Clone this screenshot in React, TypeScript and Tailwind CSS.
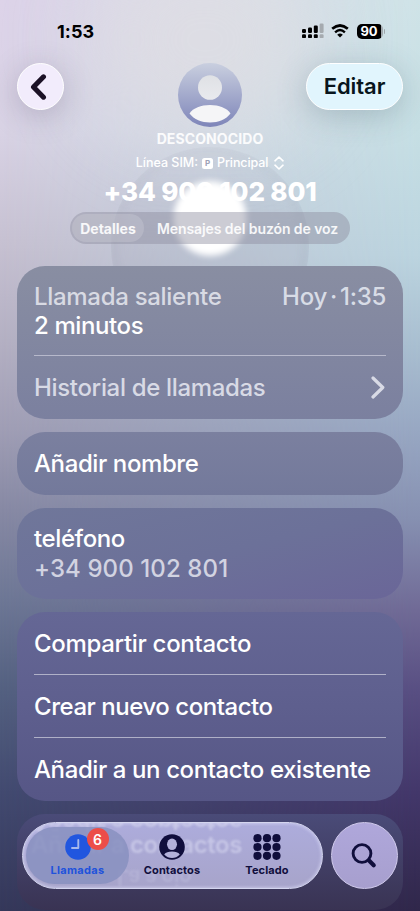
import React from 'react';

type CardProps = {
  className: string;
  children?: React.ReactNode;
};

const Card = ({ className, children }: CardProps) => (
  <section className={`w-full shrink-0 rounded-[28px] px-[17px] ${className}`}>{children}</section>
);

const Divider = () => <div className="h-px shrink-0 bg-[#c4c5d6]/80" />;

const StatusBar = () => (
  <div className="flex h-[63px] items-start justify-between pl-[57px] pr-[35px] pt-[21px]">
    <span className="pt-px text-[18px] font-bold leading-[20px] tracking-[0.1px] text-black">1:53</span>
    <div className="flex items-center pt-[2px]">
      {/* dual SIM signal */}
      <svg width="22" height="16" viewBox="0 0 22 16" className="mr-[7px]">
        <g fill="#000">
          <rect x="0" y="6" width="4" height="4" rx="1.2" />
          <rect x="6" y="4.500" width="4" height="5.500" rx="1.2" />
          <rect x="11.800" y="2.500" width="4" height="7.500" rx="1.2" />
          <rect x="0" y="11.300" width="4" height="3.800" rx="1.2" />
          <rect x="6" y="11.300" width="4" height="3.800" rx="1.2" />
          <rect x="11.800" y="11.300" width="4" height="3.800" rx="1.2" />
        </g>
        <g fill="#a5aaaf">
          <rect x="17.600" y="0.500" width="4" height="9.500" rx="1.2" />
          <rect x="17.600" y="11.300" width="4" height="3.800" rx="1.2" />
        </g>
      </svg>
      <svg width="18" height="14" viewBox="0 0 18 14" className="mr-[8px]">
        <path d="M1.2 4.800Q9-1.800 16.800 4.800" fill="none" stroke="#000" strokeWidth="2.700" />
        <path d="M4.100 8.300Q9 3.900 13.900 8.300" fill="none" stroke="#000" strokeWidth="2.400" />
        <path d="M6.200 10.700Q9 8.500 11.800 10.700L9 13.600Z" fill="#000" />
      </svg>
      <div className="flex items-center">
        <div className="flex h-[15px] w-[26px] overflow-hidden rounded-[5px] bg-[linear-gradient(90deg,#000_91%,#a2a9ae_91%)]">
          <span className="w-full pr-[1px] text-center text-[13px] font-bold leading-[15px] text-white">90</span>
        </div>
        <div className="ml-[1px] h-[5px] w-[1.5px] rounded-r-full bg-[#9fa6ab]" />
      </div>
    </div>
  </div>
);

const Avatar = () => (
  <svg width="64" height="64" viewBox="0 0 64 64">
    <defs>
      <linearGradient id="avatarBg" x1="0" y1="0" x2="0" y2="1">
        <stop offset="0" stopColor="#c9cfdf" />
        <stop offset="1" stopColor="#7e85b9" />
      </linearGradient>
      <linearGradient id="avatarFg" x1="0" y1="0" x2="0" y2="1">
        <stop offset="0" stopColor="#dfe1e5" />
        <stop offset="1" stopColor="#e9eaee" />
      </linearGradient>
    </defs>
    <circle cx="32" cy="32" r="32" fill="url(#avatarBg)" />
    <ellipse cx="32" cy="24.500" rx="12" ry="12.300" fill="url(#avatarFg)" />
    <path d="M11.500 50.500C15 45 23 42 32 42s17 3 20.500 8.500C48 56.500 40.500 59.500 32 59.500S16 56.500 11.500 50.500Z" fill="#f5f5f7" />
  </svg>
);

const TabBar = () => (
  <nav className="absolute left-[22px] top-[822px] flex gap-[8px]">
    <div className="relative flex h-[67px] w-[301px] overflow-hidden rounded-full border border-[#d4d5ef] bg-linear-to-b from-[#adacdc] to-[#a7a4ca] shadow-[inset_0_0_3px_1px_rgba(220,220,250,0.55)]">
      {/* list row refracted through the glass */}
      <div aria-hidden="true" className="absolute inset-0 whitespace-nowrap text-[24px] font-semibold leading-[28px] tracking-[-0.400px] text-[#d2d1ec]/70 blur-[1.3px]">
        <div className="absolute left-[8px] top-[-15px] -scale-y-100">Añadir a contactos</div>
        <div className="absolute left-[8px] top-[8px]">Añadir a contactos</div>
        <div className="absolute left-[94px] top-[40px] -scale-y-100 text-[21px] opacity-40">La a ojo</div>
      </div>

      <div className="relative ml-[3px] mt-[4px] flex h-[57px] w-[103px] shrink-0 flex-col items-center rounded-full bg-[#8890bf]/85 text-[#2052dc]">
        <div className="relative mt-[7px]">
          <svg width="26" height="26" viewBox="0 0 26 26">
            <circle cx="13" cy="13" r="12.800" fill="#2156df" />
            <path d="M13.300 6v8H7" fill="none" stroke="#a6b8ec" strokeWidth="1.900" strokeLinecap="round" strokeLinejoin="round" />
          </svg>
          <span className="absolute left-[22px] top-[-6px] flex size-[22px] items-center justify-center rounded-full bg-[#ec4d49] text-[14px] font-semibold text-white">6</span>
        </div>
        <span className="mt-[4px] text-[11px] font-bold leading-[13px] tracking-[0.300px]">Llamadas</span>
      </div>
      <div className="relative -ml-[5px] flex w-[96px] flex-col items-center pt-[11px] text-[#100e3c]">
        <svg width="26" height="26" viewBox="0 0 26 26">
          <circle cx="13" cy="13" r="12.800" fill="#100e3c" />
          <ellipse cx="13" cy="10.300" rx="5" ry="5.800" fill="#b3b1db" />
          <path d="M5.200 20.500C6.700 18.200 9.500 17.500 13 17.500s6.300.7 7.800 3C18.500 22.900 16 24 13 24s-5.500-1.100-7.800-3.500Z" fill="#b3b1db" />
        </svg>
        <span className="mt-[4px] text-[11px] font-bold leading-[13px] tracking-[0.100px]">Contactos</span>
      </div>
      <div className="relative flex w-[94px] flex-col items-center pt-[11px] text-[#100e3c]">
        <svg width="28" height="26" viewBox="0 0 28 26" fill="#100e3c">
          {[4.200, 13, 21.800].map((cy) =>
            [4.500, 14, 23.500].map((cx) => <circle key={`${cx}-${cy}`} cx={cx} cy={cy} r="4.100" />)
          )}
        </svg>
        <span className="mt-[4px] text-[11px] font-bold leading-[13px] tracking-[0.100px]">Teclado</span>
      </div>
    </div>

    <button className="flex size-[67px] items-center justify-center rounded-full border border-[#d1cbed] bg-linear-to-b from-[#afa7db] to-[#a79fce]">
      <svg width="26" height="26" viewBox="0 0 26 26" fill="none" stroke="#100e3c" strokeLinecap="round" className="mr-px">
        <circle cx="11" cy="10.500" r="8.900" strokeWidth="2.900" />
        <path d="M18 17.500l4.700 4.700" strokeWidth="4.200" />
      </svg>
    </button>
  </nav>
);

function App() {
  return (
    <div className="relative h-[911px] w-[420px] overflow-hidden bg-[linear-gradient(180deg,#ddd3e9_0%,#d9d3e5_14%,#c6c0d1_27%,#b3afc2_38%,#a09eb5_47%,#8789a4_56%,#6d7795_66%,#536080_76%,#424a70_87%,#35385a_100%)] font-['Inter','Liberation_Sans',sans-serif] text-white">
      {/* cooler, then violet, right half of the wallpaper */}
      <div className="absolute inset-0 bg-[linear-gradient(180deg,#cfe3e7_0%,#c6dfe4_14%,#bbd4df_28%,#a8bed0_38%,#98a8c3_47%,#8690b1_57%,#706a96_67%,#584e82_76%,#43376a_87%,#30274a_100%)] [mask-image:linear-gradient(90deg,transparent,black)]" />
      <div className="absolute left-[90px] top-[-60px] h-[200px] w-[230px] rounded-full bg-[#e2e0e3]/60 blur-[40px]" />
      {/* soft halo behind the number */}
      <div className="absolute left-[111px] top-[147px] size-[198px] rounded-full border-[5px] border-[#84859a]/20 bg-[#a3a6b8]/20 blur-[4px] [mask-image:linear-gradient(180deg,rgba(0,0,0,0.5),black_50%)]" />

      <div className="relative flex flex-col">
        <StatusBar />

        <header className="flex flex-col items-center">
          <div className="flex w-full items-start justify-between px-[17px]">
            <div className="flex w-[97px]">
              <button className="flex size-[47px] items-center justify-center rounded-full border border-white bg-[#f2ecfc] shadow-[0_6px_30px_rgba(70,60,90,0.25)]">
                <svg width="18" height="28" viewBox="0 0 18 28" className="mr-[6px]">
                  <path d="M14.500 3.800 4.500 14l10 10.200" fill="none" stroke="#1c1226" strokeWidth="5" strokeLinecap="round" strokeLinejoin="round" />
                </svg>
              </button>
            </div>
            <Avatar />
            <button className="h-[47px] w-[97px] rounded-full border border-white bg-[#e1f5fd] text-[22px] font-semibold tracking-[-0.050px] text-[#08151c] shadow-[0_6px_30px_rgba(50,80,90,0.25)]">
              Editar
            </button>
          </div>

          <h2 className="mt-[4px] text-[14px] font-bold leading-[16px] tracking-[0.100px] text-white/90">DESCONOCIDO</h2>
          <div className="mt-[8px] flex h-[16px] items-center text-[12.500px] font-medium">
            <span>Línea SIM:</span>
            <span className="ml-[4px] mr-[4px] flex size-[11px] items-center justify-center rounded-[2.500px] bg-white text-[8px] font-bold text-[#9fa2b6]">P</span>
            <span className="tracking-[-0.100px]">Principal</span>
            <svg width="10" height="14" viewBox="0 0 10 14" className="ml-[6px]" fill="none" stroke="#fff" strokeWidth="1.600" strokeLinecap="round" strokeLinejoin="round">
              <path d="M1 4.800 5 1l4 3.800M1 9.200 5 13l4-3.800" />
            </svg>
          </div>
          <div className="relative mt-[6px]">
            <h1 className="text-[26px] font-extrabold leading-[30px] tracking-[-0.180px]">+34 900 102 801</h1>
            <div className="absolute left-1/2 top-[4px] h-[75px] w-[73px] -translate-x-1/2 rounded-full bg-white blur-[3px]" />
          </div>

          <div className="relative mt-[5px] flex h-[32px] w-[280px] items-center rounded-full bg-[#8d8f9f]/45 p-[2px] text-[14px] font-semibold text-white/90">
            <div className="flex h-[28px] w-[72px] items-center justify-center rounded-full bg-white/15 font-bold">Detalles</div>
            <div className="flex-1 pl-[3px] text-center tracking-[-0.080px]">Mensajes del buzón de voz</div>
          </div>
        </header>

        <main className="mt-[22px] flex flex-col gap-[13px] px-[17px] text-[24px] font-medium leading-[28px] tracking-[-0.400px]">
          <Card className="flex h-[153px] flex-col bg-linear-to-b from-[#898ea2] to-[#7b809f]">
            <div className="flex h-[89px] justify-between pt-[17px]">
              <div>
                <div className="tracking-[-0.300px] text-[#d8dae3]">Llamada saliente</div>
                <div className="mt-px">2 minutos</div>
              </div>
              <div className="tracking-[-0.300px] text-[#d8dce6] [word-spacing:-3px]">Hoy · 1:35</div>
            </div>
            <Divider />
            <div className="flex flex-1 items-center justify-between text-[#d8dae5]">
              <span className="pt-px tracking-[-0.330px]">Historial de llamadas</span>
              <svg width="15" height="23" viewBox="0 0 15 23" fill="none" stroke="currentColor" strokeWidth="3.200" strokeLinecap="round" strokeLinejoin="round">
                <path d="M2 2l9.800 9.500L2 21" />
              </svg>
            </div>
          </Card>

          <Card className="flex h-[63px] items-center bg-linear-to-b from-[#7b809f] to-[#73799b]">Añadir nombre</Card>

          <Card className="h-[91px] bg-linear-to-br from-[#70779a] via-[#6c7199] to-[#6a6698] pt-[17px]">
            <div>teléfono</div>
            <div className="mt-[2px] tracking-[0.100px] text-[#d2d3e1]">+34 900 102 801</div>
          </Card>

          <Card className="flex h-[189px] flex-col bg-linear-to-b from-[#656795] via-[#5e5f8e] to-[#565686]">
            <div className="flex h-[62px] items-center pt-[2px] tracking-[-0.310px]">Compartir contacto</div>
            <Divider />
            <div className="flex h-[62px] items-center pt-[2px] tracking-[-0.460px]">Crear nuevo contacto</div>
            <Divider />
            <div className="flex flex-1 items-center">Añadir a un contacto existente</div>
          </Card>

          <Card className="h-[96px] bg-linear-to-b from-[#4a4b78] to-[#393353]" />
        </main>
      </div>

      <TabBar />
    </div>
  );
}

export default App;
